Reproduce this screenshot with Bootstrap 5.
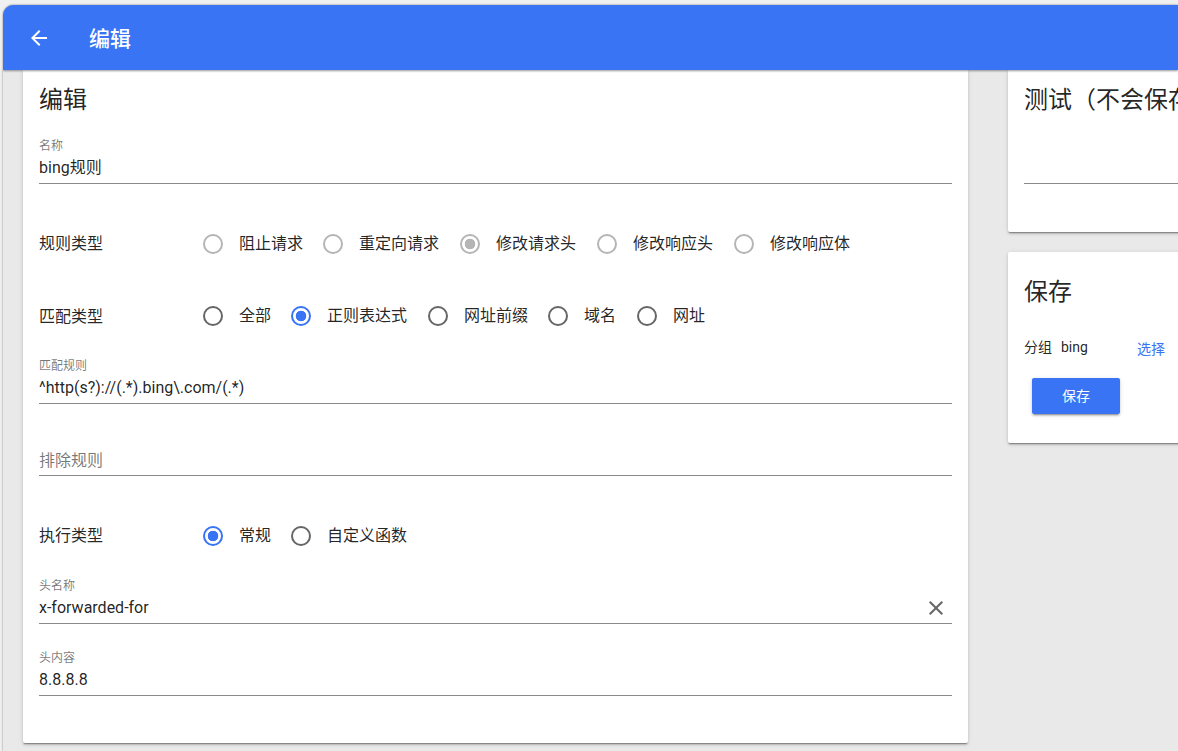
<!DOCTYPE html>
<html lang="zh">
<head>
<meta charset="utf-8">
<title>编辑</title>
<link href="https://cdn.jsdelivr.net/npm/bootstrap@5.3.0/dist/css/bootstrap.min.css" rel="stylesheet">
<style>
html, body { height: 100%; overflow: hidden; }
body { background: #f0f0f0; font-family: Roboto, "Noto Sans CJK SC", sans-serif; font-size: 16px; color: rgba(0,0,0,.87); }
.shell { margin: 5px 0 0 3px; height: calc(100vh - 5px); background: #e9e9e9; border-radius: 10px 0 0 0; box-shadow: 0 0 2px rgba(0,0,0,.55); overflow: hidden; }
.topbar { height: 65px; padding-left: 24px; background: #3874f4; color: #fff; z-index: 2; box-shadow: 0 1px 2px rgba(0,0,0,.4); }
.topbar-title { margin-left: 38px; padding-top: 2px; font-size: 21px; font-weight: 500; line-height: 32px; }
.panes { padding-left: 20px; column-gap: 40px; }
.pane-left { width: 945px; flex: none; }
.pane-right { width: 400px; flex: none; }
.sheet { background: #fff; border-radius: 0 0 2px 2px; box-shadow: 0 2px 1px -1px rgba(0,0,0,.3), 0 2px 2px 0 rgba(0,0,0,.14), 0 1px 5px 0 rgba(0,0,0,.12); }
.sheet-edit { height: 673px; padding: 14px 16px 0; }
.sheet-test { height: 162px; padding: 14px 16px 0; margin-bottom: 20px; }
.sheet-save { height: 191px; padding: 24px 16px 0; border-radius: 2px; }
.sec-title { margin: 0 0 20px; font-size: 24px; font-weight: 400; line-height: 32px; white-space: nowrap; }
.sheet-save .sec-title { margin-bottom: 27px; }
.fld { height: 48px; padding-top: 2px; border-bottom: 1px solid #8a8a8a; margin-bottom: 24px; }
.fld-label { font-size: 12px; line-height: 16px; height: 16px; color: rgba(0,0,0,.54); }
.fld-value { margin-top: 2px; line-height: 24px; height: 24px; }
.fld-empty { margin-top: 19px; color: rgba(0,0,0,.54); }
.fld-clear { flex: none; margin-right: 4px; fill: #666; }
.opt-row { height: 72px; }
.opt-row-gap { margin-bottom: 4px; }
.opt-name { width: 164px; flex: none; }
.opt-name-low { padding-top: 2px; }
.opt-list { column-gap: 20px; }
.opt-item { column-gap: 16px; }
.opt-five span { width: 81px; }
.opt-two span { width: 33px; }
.rd.form-check-input { width: 20px; height: 20px; margin: 0; float: none; flex: none; border: 2px solid #666; background: #fff; box-shadow: none; opacity: 1; }
.rd.form-check-input:checked { border-color: #3874f4; background: radial-gradient(circle, #3874f4 0, #3874f4 5px, #fff 5.6px); }
.rd.form-check-input:disabled { border-color: #b5b5b5; opacity: 1; }
.rd.form-check-input:disabled:checked { background: radial-gradient(circle, #b5b5b5 0, #b5b5b5 5px, #fff 5.6px); }
.opt-item .form-check-input:disabled ~ span { opacity: 1; }
.group-row { height: 24px; font-size: 14px; margin-bottom: 19px; }
.group-name { width: 113px; flex: none; column-gap: 9px; }
.group-pick { color: #3874f4; text-decoration: none; margin-top: 4px; }
.save-btn { width: 88px; height: 36px; margin-left: 8px; padding: 1px 0 0; font-size: 14px; line-height: 35px; color: #fff; background: #3874f4; border: 0; border-radius: 2px; box-shadow: 0 3px 1px -2px rgba(0,0,0,.2), 0 2px 2px 0 rgba(0,0,0,.14), 0 1px 5px 0 rgba(0,0,0,.12); }
</style>
</head>
<body>
<div class="shell d-flex flex-column">
  <header class="topbar d-flex align-items-center flex-shrink-0 position-relative">
    <svg width="24" height="24" viewBox="0 0 24 24" fill="#fff" aria-hidden="true"><path d="M20 11H7.83l5.59-5.59L12 4l-8 8 8 8 1.41-1.41L7.83 13H20v-2z"/></svg>
    <div class="topbar-title">编辑</div>
  </header>
  <div class="panes d-flex align-items-start">
    <main class="pane-left">
      <section class="sheet sheet-edit">
        <h2 class="sec-title">编辑</h2>
        <div class="fld">
          <div class="fld-label">名称</div>
          <div class="fld-value">bing规则</div>
        </div>
        <div class="opt-row d-flex align-items-center">
          <div class="opt-name">规则类型</div>
          <div class="opt-list d-flex">
            <label class="opt-item d-flex align-items-center"><input class="form-check-input rd" type="radio" name="a" disabled><span>阻止请求</span></label>
            <label class="opt-item opt-five d-flex align-items-center"><input class="form-check-input rd" type="radio" name="a" disabled><span>重定向请求</span></label>
            <label class="opt-item opt-five d-flex align-items-center"><input class="form-check-input rd" type="radio" name="a" disabled checked><span>修改请求头</span></label>
            <label class="opt-item opt-five d-flex align-items-center"><input class="form-check-input rd" type="radio" name="a" disabled><span>修改响应头</span></label>
            <label class="opt-item opt-five d-flex align-items-center"><input class="form-check-input rd" type="radio" name="a" disabled><span>修改响应体</span></label>
          </div>
        </div>
        <div class="opt-row opt-row-gap d-flex align-items-center">
          <div class="opt-name opt-name-low">匹配类型</div>
          <div class="opt-list d-flex">
            <label class="opt-item d-flex align-items-center"><input class="form-check-input rd" type="radio" name="b"><span>全部</span></label>
            <label class="opt-item opt-five d-flex align-items-center"><input class="form-check-input rd" type="radio" name="b" checked><span>正则表达式</span></label>
            <label class="opt-item d-flex align-items-center"><input class="form-check-input rd" type="radio" name="b"><span>网址前缀</span></label>
            <label class="opt-item opt-two d-flex align-items-center"><input class="form-check-input rd" type="radio" name="b"><span>域名</span></label>
            <label class="opt-item d-flex align-items-center"><input class="form-check-input rd" type="radio" name="b"><span>网址</span></label>
          </div>
        </div>
        <div class="fld">
          <div class="fld-label">匹配规则</div>
          <div class="fld-value">^http(s?)://(.*).bing\.com/(.*)</div>
        </div>
        <div class="fld">
          <div class="fld-value fld-empty">排除规则</div>
        </div>
        <div class="opt-row opt-row-gap d-flex align-items-center">
          <div class="opt-name">执行类型</div>
          <div class="opt-list d-flex">
            <label class="opt-item d-flex align-items-center"><input class="form-check-input rd" type="radio" name="c" checked><span>常规</span></label>
            <label class="opt-item d-flex align-items-center"><input class="form-check-input rd" type="radio" name="c"><span>自定义函数</span></label>
          </div>
        </div>
        <div class="fld">
          <div class="fld-label">头名称</div>
          <div class="fld-value d-flex justify-content-between align-items-center">
            <span>x-forwarded-for</span>
            <svg class="fld-clear" width="24" height="24" viewBox="0 0 24 24" aria-hidden="true"><path d="M19 6.41L17.59 5 12 10.59 6.41 5 5 6.41 10.59 12 5 17.59 6.41 19 12 13.41 17.59 19 19 17.59 13.41 12z"/></svg>
          </div>
        </div>
        <div class="fld">
          <div class="fld-label">头内容</div>
          <div class="fld-value">8.8.8.8</div>
        </div>
      </section>
    </main>
    <aside class="pane-right">
      <section class="sheet sheet-test">
        <h2 class="sec-title">测试（不会保存）</h2>
        <div class="fld"></div>
      </section>
      <section class="sheet sheet-save">
        <h2 class="sec-title">保存</h2>
        <div class="group-row d-flex align-items-center">
          <div class="group-name d-flex"><span>分组</span><span>bing</span></div>
          <a class="group-pick" href="#">选择</a>
        </div>
        <button class="btn save-btn" type="button">保存</button>
      </section>
    </aside>
  </div>
</div>
</body>
</html>
